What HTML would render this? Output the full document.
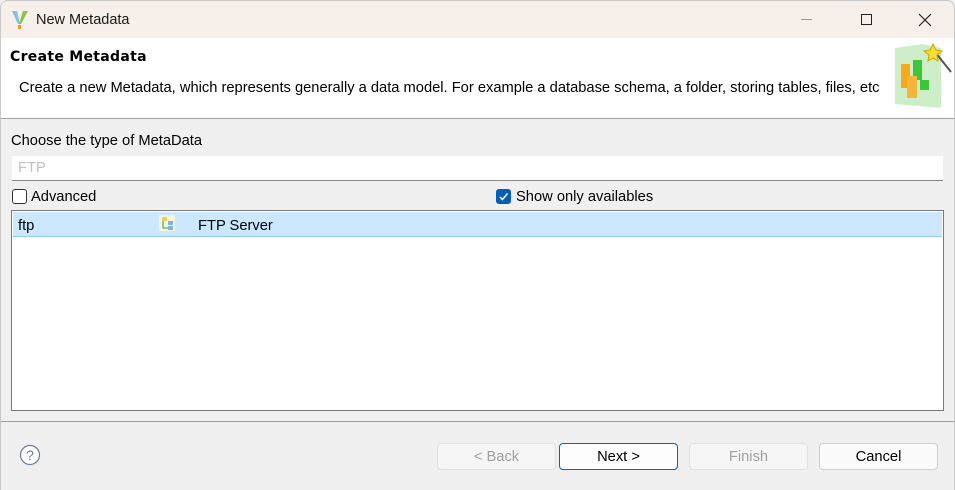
<!DOCTYPE html>
<html><head><meta charset="utf-8"><style>
*{box-sizing:border-box;margin:0;padding:0}
body{width:955px;height:490px;overflow:hidden;background:#f0f0f0;font-family:"Liberation Sans",sans-serif;font-size:14.7px;color:#000;position:relative}
.abs{position:absolute}
#title{left:0;top:0;width:955px;height:38px;background:#f6efea;border:1px solid #c8c8c8;border-bottom:none;border-radius:8px 8px 0 0}
#hdr{left:0;top:38px;width:955px;height:81px;background:#fff;border-bottom:1px solid #a0a0a0;border-left:1px solid #c8c8c8;border-right:1px solid #c8c8c8}
.btn{position:absolute;top:443px;width:119px;height:27px;border:1px solid #d0d0d0;border-radius:4px;background:#fbfbfb;text-align:center;line-height:26px;font-size:14.7px}
.dis{color:#a0a0a0;background:#f6f6f6;border-color:#e2e2e2}
.cb{position:absolute;width:15px;height:15px;border:1px solid #333;border-radius:3px;background:#fff}
</style></head><body>
<div id="title" class="abs">
  <svg class="abs" style="left:10px;top:9px" width="18" height="20" viewBox="0 0 18 20">
    <path d="M1 1 L7 14 L9 14 L6 1Z" fill="#7ec3e8"/><path d="M17 1 L10 14 L8 14 L12 1Z" fill="#8cc63e"/><rect x="7" y="15" width="3" height="4" fill="#f39a1e"/>
  </svg>
  <div class="abs" style="left:35px;top:11px;font-size:14.5px;color:#1a1a1a">New Metadata</div>
  <div class="abs" style="left:800px;top:18px;width:11px;height:1px;background:#999"></div>
  <div class="abs" style="left:860px;top:13px;width:11px;height:11px;border:1px solid #222"></div>
  <svg class="abs" style="left:917px;top:12px" width="14" height="14"><path d="M1 1L13 13M13 1L1 13" stroke="#222" stroke-width="1.2"/></svg>
</div>
<div id="hdr" class="abs">
  <div class="abs" style="left:9px;top:11px;font-weight:bold;font-family:'DejaVu Sans',sans-serif;font-size:14px;letter-spacing:0.3px">Create Metadata</div>
  <div class="abs" style="left:18px;top:42px">Create a new Metadata, which represents generally a data model. For example a database schema, a folder, storing tables, files, etc</div>
  <svg class="abs" style="left:892px;top:4px" width="60" height="68" viewBox="0 0 60 68">
    <path d="M2 6 L30 2 L48 6 L48 66 L2 62Z" fill="#cdeec8"/>
    <rect x="8" y="22" width="9" height="24" fill="#f6a91d"/><rect x="20" y="18" width="9" height="20" fill="#3bc63b"/><rect x="14" y="34" width="10" height="22" fill="#f6b53a"/><rect x="27" y="38" width="9" height="10" fill="#3bc63b"/>
    <path d="M42 10 L58 30" stroke="#555" stroke-width="2"/><path d="M40 2 L43 8 L49 9 L44 13 L45 19 L40 16 L35 19 L36 13 L31 9 L37 8Z" fill="#f5df3a" stroke="#c9a500"/>
  </svg>
</div>
<div class="abs" style="left:11px;top:133px">Choose the type of MetaData</div>
<div class="abs" style="left:12px;top:156px;width:931px;height:25px;background:#fff;border-bottom:1px solid #888;color:#c0c0c0;padding:4px 6px">FTP</div>
<div class="cb" style="left:12px;top:189px"></div>
<div class="abs" style="left:31px;top:189px">Advanced</div>
<div class="cb" style="left:496px;top:189px;background:#005fb8;border-color:#005fb8"><svg width="13" height="13" style="position:absolute;left:0;top:0"><path d="M3 7L5.5 9.5L10.5 3.5" stroke="#fff" stroke-width="1.5" fill="none"/></svg></div>
<div class="abs" style="left:516px;top:189px">Show only availables</div>
<div class="abs" style="left:11px;top:210px;width:933px;height:201px;background:#fff;border:1px solid #7a7a7a">
  <div class="abs" style="left:1px;top:1px;width:929px;height:25px;background:#cce8ff;border-bottom:1px solid #99c9ef"></div>
  <div class="abs" style="left:6px;top:7px">ftp</div>
  <svg class="abs" style="left:147px;top:4px" width="16" height="16"><rect x="0" y="0" width="16" height="16" fill="#f4f4e0"/><rect x="3" y="2" width="5" height="4" fill="#e8cf5a"/><path d="M4 6V13H9" stroke="#3a9a3a" fill="none"/><rect x="9" y="6" width="5" height="4" fill="#7fb3e0"/><rect x="9" y="11" width="5" height="4" fill="#7fb3e0"/></svg>
  <div class="abs" style="left:186px;top:7px">FTP Server</div>
</div>
<div class="abs" style="left:0;top:421px;width:955px;height:1px;background:#a0a0a0"></div>
<svg class="abs" style="left:19px;top:444px" width="22" height="22"><circle cx="11" cy="11" r="9.5" fill="#fff" stroke="#6b7a99" stroke-width="1.2"/><text x="11" y="16" text-anchor="middle" font-size="14" font-family="Liberation Sans" fill="#6b7a99">?</text></svg>
<div class="btn dis" style="left:437px">&lt; Back</div>
<div class="btn" style="left:559px;border-color:#0067c0;background:#fdfdfd">Next &gt;</div>
<div class="btn dis" style="left:689px">Finish</div>
<div class="btn" style="left:819px">Cancel</div>
<div class="abs" style="left:0;top:38px;width:1px;height:452px;background:#c8c8c8"></div>
<div class="abs" style="left:954px;top:38px;width:1px;height:452px;background:#c8c8c8"></div>
</body></html>
